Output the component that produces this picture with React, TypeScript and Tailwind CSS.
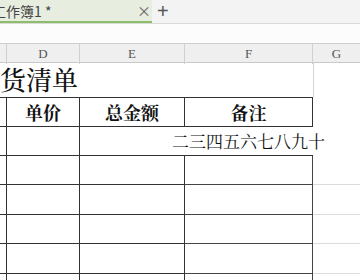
const cjk = { fontFamily: '"Noto Serif CJK SC", "Noto Sans CJK SC", "Liberation Serif", serif' };
const cjkSans = { fontFamily: '"Noto Sans CJK SC", "Liberation Sans", sans-serif' };

const rowHeights = [29, 29, 30, 29, 30, 29];

const App = () => {
	return (
		<div className="w-[360px] h-[280px] overflow-hidden bg-white flex flex-col">
			{/* tab bar */}
			<div className="h-[24px] shrink-0 flex items-start bg-[#f3f3f3] border-b border-[#d9d9d9]">
				<div className="w-[152px] h-[23px] bg-[#e7eedf] border-b-2 border-[#8cbd6a] flex items-center relative">
					<span className="ml-[-8px] text-[14px] text-[#444] leading-none" style={cjkSans}>工作簿1 *</span>
					<span className="absolute left-[137px] top-[3px] text-[14px] text-[#666] leading-none" style={cjkSans}>×</span>
				</div>
				<span className="ml-[5px] h-[22px] flex items-center text-[20px] font-light leading-none text-[#555]" style={{ fontFamily: '"Liberation Sans", sans-serif' }}>+</span>
			</div>
			{/* formula strip */}
			<div className="h-[20px] shrink-0 bg-[#fcfcfc] border-b border-[#cfcfcf]" />
			{/* column header */}
			<div className="h-[19px] shrink-0 grid grid-cols-[7px_73px_105px_128px_47px] bg-[#efefef] border-b border-[#c9c9c9] text-[13px] text-[#555]" style={{ fontFamily: '"Liberation Serif", serif' }}>
				<div className="border-r border-[#cfcfcf]" />
				<div className="border-r border-[#cfcfcf] flex items-center justify-center">D</div>
				<div className="border-r border-[#cfcfcf] flex items-center justify-center">E</div>
				<div className="border-r border-[#cfcfcf] flex items-center justify-center">F</div>
				<div className="flex items-center justify-center">G</div>
			</div>
			{/* title row */}
			<div className="h-[34px] shrink-0 grid grid-cols-[313px_47px]">
				<div className="flex items-center">
					<span className="text-[26px] font-medium text-[#111] leading-none mt-[-2px]" style={cjk}>货清单</span>
				</div>
				<div className="border-l border-[#d4d4d4]" />
			</div>
			{/* table header */}
			<div className="h-[30px] shrink-0 grid grid-cols-[7px_73px_105px_128px_47px] border-t border-[#333]">
				<div className="border-r border-[#333] border-b" />
				<div className="border-r border-b border-[#333] flex items-center justify-center text-[18px] font-bold text-[#111]" style={cjk}>单价</div>
				<div className="border-r border-b border-[#333] flex items-center justify-center text-[18px] font-bold text-[#111]" style={cjk}>总金额</div>
				<div className="border-r border-b border-[#333] flex items-center justify-center text-[18px] font-bold text-[#111]" style={cjk}>备注</div>
				<div className="bg-white mt-[-1px]" />
			</div>
			{/* text row */}
			<div className="h-[29px] shrink-0 grid grid-cols-[7px_73px_233px_47px] relative">
				<div className="border-r border-b border-[#333]" />
				<div className="border-r border-b border-[#333]" />
				<div className="border-b border-[#333]" />
				<div />
				<span className="absolute left-[172px] top-[5px] text-[17px] text-[#111] leading-none" style={cjk}>二三四五六七八九十</span>
			</div>
			{rowHeights.slice(1).map((h, i) => (
				<div key={i} className="shrink-0 grid grid-cols-[7px_73px_105px_128px_47px]" style={{ height: h }}>
					<div className="border-r border-b border-[#333]" />
					<div className="border-r border-b border-[#333]" />
					<div className="border-r border-b border-[#333]" />
					<div className="border-r border-b border-[#444]" />
					<div className="border-b border-[#dcdcdc]" />
				</div>
			))}
		</div>
	);
};

export default App;
